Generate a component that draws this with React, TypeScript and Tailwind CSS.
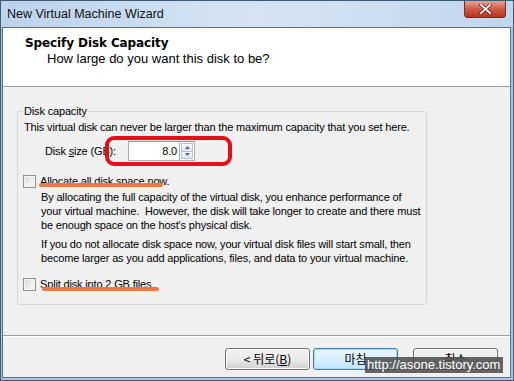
import React from 'react';

const Checkbox: React.FC = () => (
    <span className="block w-[13px] h-[13px] shrink-0 border border-[#8f8f8f] bg-gradient-to-br from-[#d9d9d9] via-[#ededed] to-[#fbfbfb] shadow-[inset_0_0_0_1px_#f5f5f5]" />
);

const Marker: React.FC<{ className: string }> = ({ className }) => (
    <span className={`absolute h-[4px] rounded-full bg-[#f07a45] ${className}`} />
);

const Spinner: React.FC = () => (
    <div className="flex flex-col w-[15px] h-[20px] border border-l-0 border-[#abadb3] border-t-[#8d939d] bg-white p-[1px]">
        <span className="flex-1 flex items-center justify-center border border-[#b9c1cc] bg-gradient-to-b from-[#f8f9fb] to-[#dfe4ec]">
            <svg width="5" height="3" viewBox="0 0 5 3">
                <path d="M0 3 L2.5 0 L5 3 Z" fill="#4f6486" />
            </svg>
        </span>
        <span className="flex-1 flex items-center justify-center border border-t-0 border-[#b9c1cc] bg-gradient-to-b from-[#f8f9fb] to-[#dfe4ec]">
            <svg width="5" height="3" viewBox="0 0 5 3">
                <path d="M0 0 L2.5 3 L5 0 Z" fill="#4f6486" />
            </svg>
        </span>
    </div>
);

interface WizardButtonProps {
    label: React.ReactNode;
    focused?: boolean;
}

const WizardButton: React.FC<WizardButtonProps> = ({ label, focused }) => (
    <button
        className={`w-[85px] h-[22px] rounded-[3px] border flex items-center justify-center text-[12px] leading-[14px] text-black ${
            focused
                ? 'border-[#3c7fb1] bg-gradient-to-b from-[#eaf6fd] via-[#d9f0fc] to-[#bee6fd] shadow-[inset_0_0_0_1px_#a7d9f5]'
                : 'border-[#707070] bg-gradient-to-b from-[#f2f2f2] via-[#ebebeb] to-[#cfcfcf] shadow-[inset_0_0_0_1px_#fcfcfc]'
        }`}
    >
        {label}
    </button>
);

export default function App() {
    return (
        <div className="relative w-[514px] h-[381px] overflow-hidden border border-[#3f5a73] bg-[#a9c5e2] flex flex-col font-['Liberation_Sans','Noto_Sans_CJK_KR',sans-serif] text-[11px] text-black">
            {/* title bar */}
            <div className="h-[26px] shrink-0 flex items-start justify-between bg-gradient-to-r from-[#bcd3ec] via-[#d4e4f5] to-[#c0d6ee]">
                <span className="pl-[6px] pt-[6px] text-[12.5px] leading-[14px] text-[#111]">New Virtual Machine Wizard</span>
                <div className="mr-[7px] w-[42px] h-[17px] rounded-b-[4px] border border-t-0 border-[#7a2b22] bg-gradient-to-b from-[#e0a397] via-[#cf5b44] to-[#b8321f] flex items-center justify-center">
                    <svg width="13" height="10" viewBox="0 0 13 10">
                        <path d="M2 1 L11 9 M11 1 L2 9" stroke="#5a1a12" strokeWidth="3.2" strokeLinecap="square" />
                        <path d="M2 1 L11 9 M11 1 L2 9" stroke="#ffffff" strokeWidth="1.8" strokeLinecap="square" />
                    </svg>
                </div>
            </div>

            {/* client area */}
            <div className="flex-1 ml-[1px] mr-[2px] mb-[2px] border border-[#5b6f85] bg-[#f0f0f0] flex flex-col">
                {/* header */}
                <div className="h-[59px] shrink-0 bg-white border-b border-[#a0a0a0] pt-[8px] pl-[22px]">
                    <div className="font-['DejaVu_Sans',sans-serif] font-bold text-[12px] leading-[14px] tracking-[-0.1px]">
                        Specify Disk Capacity
                    </div>
                    <div className="mt-[2px] pl-[22px] text-[13px] leading-[14px]">How large do you want this disk to be?</div>
                </div>

                {/* body */}
                <div className="flex-1 tracking-[-0.16px]">
                    <fieldset className="mt-[17px] ml-[14px] w-[410px] min-w-0 border border-[#d5d5d5] rounded-[3px] pb-[13px]">
                        <legend className="ml-[5px] px-[1px] leading-[14px]">Disk capacity</legend>
                        <div className="pt-[2px] pl-[6px] leading-[14px]">
                            <div>This virtual disk can never be larger than the maximum capacity that you set here.</div>

                            <div className="relative mt-[7px] h-[20px] flex items-center">
                                <span className="ml-[21px] w-[83px]">
                                    Disk <span className="underline">s</span>ize (GB):
                                </span>
                                <div className="flex h-[20px]">
                                    <div className="w-[52px] h-[20px] border border-[#abadb3] border-t-[#8d939d] bg-white flex items-center justify-end pr-[2px]">
                                        8.0
                                    </div>
                                    <Spinner />
                                </div>
                                <span className="absolute left-[81px] top-[-5px] w-[127px] h-[30px] border-[4px] border-[#e3101b] rounded-[9px]" />
                            </div>

                            <div className="relative mt-[13px] -ml-[1px] h-[14px] flex items-center gap-[4px]">
                                <Checkbox />
                                <span>Allocate all disk space now.</span>
                                <Marker className="left-[16px] top-[9px] w-[124px]" />
                            </div>

                            <div className="mt-[2px] pl-[17px] whitespace-pre">
                                <div>By allocating the full capacity of the virtual disk, you enhance performance of</div>
                                <div>your virtual machine.  However, the disk will take longer to create and there must</div>
                                <div>be enough space on the host's physical disk.</div>
                            </div>

                            <div className="mt-[5px] pl-[17px] whitespace-pre">
                                <div>If you do not allocate disk space now, your virtual disk files will start small, then</div>
                                <div>become larger as you add applications, files, and data to your virtual machine.</div>
                            </div>

                            <div className="relative mt-[12px] -ml-[1px] h-[14px] flex items-center gap-[4px]">
                                <Checkbox />
                                <span>Split disk into 2 GB files.</span>
                                <Marker className="left-[19px] top-[10px] w-[117px]" />
                            </div>
                        </div>
                    </fieldset>
                </div>

                {/* footer */}
                <div className="h-[42px] shrink-0 border-t border-[#a0a0a0] shadow-[inset_0_1px_0_#ffffff] pt-[12px] pr-[12px] flex justify-end items-start font-['Noto_Sans_CJK_KR','Liberation_Sans',sans-serif]">
                    <WizardButton
                        label={
                            <span>
                                &lt; 뒤로(<span className="underline">B</span>)
                            </span>
                        }
                    />
                    <div className="ml-[3px]">
                        <WizardButton label="마침" focused />
                    </div>
                    <div className="ml-[15px]">
                        <WizardButton label="취소" />
                    </div>
                </div>
            </div>

            {/* watermark */}
            <div className="absolute left-[364px] top-[356px] w-[138px] h-[16px] bg-[#4a4a4a]/85 text-white text-[13px] leading-[16px] pl-[2px] whitespace-nowrap">
                http://asone.tistory.com
            </div>
        </div>
    );
}
